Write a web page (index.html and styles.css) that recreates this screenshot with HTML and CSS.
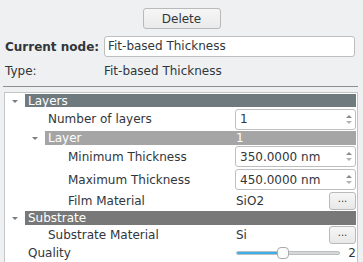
FILE: index.html
```html
<!DOCTYPE html>
<html lang="en">
<head>
    <meta charset="UTF-8">
    <title>Node Properties</title>
    <link rel="stylesheet" href="styles.css">
</head>
<body>
    <div class="panel">
        <div class="top-bar">
            <button class="btn">Delete</button>
        </div>
        <div class="field-row node-row">
            <span class="field-label bold">Current node:</span>
            <div class="line-edit">Fit-based Thickness</div>
        </div>
        <div class="field-row type-row">
            <span class="field-label">Type:</span>
            <span>Fit-based Thickness</span>
        </div>
        <div class="divider"></div>

        <div class="tree">
            <div class="row group h-layers">
                <span class="arrow"></span>
                <div class="bar dark"><span>Layers</span></div>
            </div>
            <div class="row h-num indent1">
                <span class="name">Number of layers</span>
                <div class="value"><div class="spin"><span>1</span><span class="spin-btns"></span></div></div>
            </div>
            <div class="row group h-layer indent1">
                <span class="arrow"></span>
                <div class="bar light"><span class="name">Layer</span><span class="bar-value">1</span></div>
            </div>
            <div class="row h-min indent2">
                <span class="name">Minimum Thickness</span>
                <div class="value"><div class="spin"><span>350.0000 nm</span><span class="spin-btns"></span></div></div>
            </div>
            <div class="row h-max indent2">
                <span class="name">Maximum Thickness</span>
                <div class="value"><div class="spin"><span>450.0000 nm</span><span class="spin-btns"></span></div></div>
            </div>
            <div class="row h-film indent2">
                <span class="name">Film Material</span>
                <div class="value"><span class="text-value">SiO2</span><button class="dots">...</button></div>
            </div>
            <div class="row group h-sub">
                <span class="arrow"></span>
                <div class="bar dark-gray"><span>Substrate</span></div>
            </div>
            <div class="row h-submat indent1">
                <span class="name">Substrate Material</span>
                <div class="value"><span class="text-value">Si</span><button class="dots">...</button></div>
            </div>
            <div class="row h-quality indent0">
                <span class="name">Quality</span>
                <div class="value">
                    <div class="slider">
                        <div class="groove"><div class="fill" style="width: 45%"></div></div>
                        <div class="handle" style="left: 45%"></div>
                    </div>
                    <span class="slider-val">2</span>
                </div>
            </div>
        </div>
    </div>
</body>
</html>
```

FILE: styles.css
```css
body {
    margin: 0;
    background-color: #eff0f1;
    font-family: 'DejaVu Sans', sans-serif;
    font-size: 12px;
    color: #31363b;
    overflow: hidden;
}

.panel {
    width: 363px;
    height: 262px;
    overflow: hidden;
}

.top-bar {
    display: flex;
    justify-content: center;
    padding-top: 8px;
}

.btn {
    width: 78px;
    height: 21px;
    font-family: inherit;
    font-size: 12px;
    color: #31363b;
    background: linear-gradient(#f6f6f6, #eaeaea);
    border: 1px solid #b7b9bb;
    border-radius: 3px;
    padding: 0;
}

.field-row {
    display: flex;
    align-items: center;
    padding-left: 5px;
}

.node-row {
    margin-top: 7px;
}

.field-label {
    width: 99px;
}

.bold {
    font-weight: bold;
}

.line-edit {
    width: 246px;
    height: 19px;
    line-height: 19px;
    background-color: #fff;
    border: 1px solid #bcbebf;
    border-radius: 3px;
    padding-left: 3px;
}

.type-row {
    margin-top: 4px;
    height: 20px;
}

.divider {
    margin: 5px 5px 0 3px;
    height: 1px;
    background-color: #8c8e90;
}

.tree {
    margin: 5px 5px 0 4px;
    height: 200px;
    background-color: #fff;
    border: 1px solid #c3c5c7;
    border-bottom: none;
    padding-top: 1px;
    padding-right: 1px;
}

.row {
    display: flex;
    align-items: center;
}

.h-layers { height: 13px; }
.h-num { height: 24px; }
.h-layer { height: 14px; }
.h-min { height: 23px; }
.h-max { height: 23px; }
.h-film { height: 20px; }
.h-sub { height: 14px; }
.h-submat { height: 20px; }
.h-quality { height: 16px; }

.row .name {
    flex: 1;
}

.indent0 { padding-left: 23px; }
.indent1 { padding-left: 43px; }
.indent2 { padding-left: 63px; }

.group {
    padding-left: 0;
}

.group.indent1 {
    padding-left: 20px;
}

.arrow {
    width: 20px;
    height: 100%;
    position: relative;
    flex: none;
}

.arrow::after {
    content: '';
    position: absolute;
    left: 7px;
    top: 50%;
    margin-top: -1px;
    border-left: 3px solid transparent;
    border-right: 3px solid transparent;
    border-top: 3px solid #7a7c7e;
}

.bar {
    flex: 1;
    height: 100%;
    display: flex;
    align-items: center;
    color: #fff;
    padding-left: 3px;
}

.bar.dark { background-color: #6f7a7f; }
.bar.light { background-color: #a5a5a5; }
.bar.dark-gray { background-color: #777877; }

.bar .name {
    width: 188px;
    flex: none;
}

.bar-value {
    flex: 1;
}

.value {
    width: 121px;
    flex: none;
    display: flex;
    align-items: center;
}

.spin {
    width: 121px;
    height: 21px;
    border: 1px solid #bcbebf;
    border-radius: 3px;
    display: flex;
    align-items: center;
    padding-left: 4px;
    box-sizing: border-box;
}

.spin span:first-child {
    flex: 1;
}

.spin-btns {
    width: 12px;
    height: 100%;
    position: relative;
}

.spin-btns::before,
.spin-btns::after {
    content: '';
    position: absolute;
    left: 3px;
    border-left: 3px solid transparent;
    border-right: 3px solid transparent;
}

.spin-btns::before {
    top: 5px;
    border-bottom: 3px solid #8a8c8e;
}

.spin-btns::after {
    bottom: 5px;
    border-top: 3px solid #b0b2b4;
}

.text-value {
    flex: 1;
    padding-left: 1px;
}

.dots {
    width: 27px;
    height: 18px;
    font-family: inherit;
    font-size: 10px;
    color: #31363b;
    background: linear-gradient(#f6f6f6, #e8e8e8);
    border: 1px solid #b7b9bb;
    border-radius: 3px;
    padding: 0 0 4px;
    line-height: 10px;
}

.slider {
    position: relative;
    width: 106px;
    height: 14px;
    margin-left: 1px;
}

.groove {
    position: absolute;
    left: 0;
    right: 0;
    top: 5px;
    height: 4px;
    border-radius: 2px;
    background-color: #d5d7d8;
    border: 1px solid #bcbebf;
    box-sizing: border-box;
    overflow: hidden;
}

.fill {
    height: 100%;
    background-color: #3daee9;
}

.handle {
    position: absolute;
    top: 1px;
    width: 12px;
    height: 12px;
    margin-left: -6px;
    background: #fcfcfc;
    border: 1px solid #a8aaac;
    border-radius: 4px;
    box-sizing: border-box;
}

.slider-val {
    margin-left: 8px;
}
```
